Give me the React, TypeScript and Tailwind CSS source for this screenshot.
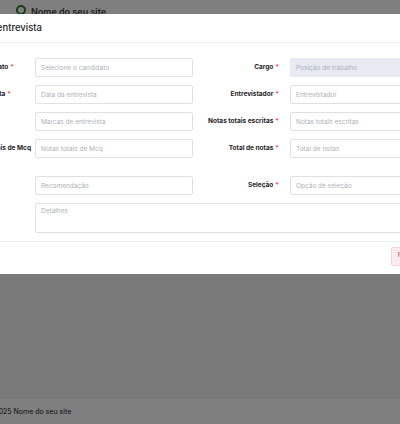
import React from 'react';

type Field = {
  label: string;
  required?: boolean;
  placeholder: string;
  disabled?: boolean;
  labelPad?: string;
};

const rows: { left: Field | null; right: Field | null; extra?: string }[] = [
  {
    left: { label: 'Candidato', required: true, placeholder: 'Selecione o candidato', labelPad: 'pr-[10px]' },
    right: { label: 'Cargo', required: true, placeholder: 'Posição de trabalho', disabled: true },
  },
  {
    left: { label: 'Data da entrevista', required: true, placeholder: 'Data da entrevista', labelPad: 'pr-[13px]' },
    right: { label: 'Entrevistador', required: true, placeholder: 'Entrevistador' },
  },
  {
    left: { label: '', placeholder: 'Marcas de entrevista' },
    right: { label: 'Notas totais escritas', required: true, placeholder: 'Notas totais escritas' },
  },
  {
    left: { label: 'Notas totais de Mcq', placeholder: 'Notas totais de Mcq', labelPad: 'translate-x-[7px]' },
    right: { label: 'Total de notas', required: true, placeholder: 'Total de notas' },
    extra: 'mb-[10px]',
  },
  {
    left: { label: '', placeholder: 'Recomendação' },
    right: { label: 'Seleção', required: true, placeholder: 'Opção de seleção' },
  },
];

const FieldCell: React.FC<{ field: Field }> = ({ field }) => (
  <div className="flex items-center">
    <label
      className={`w-[79px] shrink-0 text-right text-[6.5px] font-bold text-[#1f2328] leading-none whitespace-nowrap ${field.labelPad ?? ''}`}
    >
      {field.label}
      {field.required && <span className="text-[#e5484d] ml-[2px]">*</span>}
    </label>
    <input
      disabled={field.disabled}
      placeholder={field.placeholder}
      className={`ml-[11px] w-[158px] h-[19px] rounded-[2px] border px-[5px] text-[6.5px] outline-none placeholder:text-[#adb1b7] ${
        field.disabled ? 'bg-[#e7eaf2] border-[#e7eaf2]' : 'bg-white border-[#dfe1e5]'
      }`}
    />
  </div>
);

export default function App() {
  return (
    <div className="relative w-[400px] h-[424px] overflow-hidden bg-[#f5f5f5] font-['Inter',sans-serif]">
      {/* page behind */}
      <div className="flex flex-col h-full">
        <div className="h-[40px] bg-white flex items-start gap-[5px] pl-[16px] pt-[5px]">
          <div className="w-[10px] h-[10px] rounded-full border-2 border-[#2e7d32]" />
          <span className="text-[9px] font-semibold text-[#444]">Nome do seu site</span>
        </div>
        <div className="flex-1" />
        <div className="h-[25px] bg-white flex items-center pt-[2px] text-[7px] text-[#222]">
          <span className="-ml-[14px]">© 2025 Nome do seu site</span>
        </div>
      </div>

      {/* overlay */}
      <div className="absolute inset-0 bg-black/50" />

      {/* modal */}
      <div className="absolute top-[14px] left-[-71px] w-[528px] bg-white">
        <div className="h-[29px] flex items-center px-[16px] border-b border-[#eeeff1]">
          <h2 className="text-[9.5px] font-medium text-[#1f2328] pl-[6px]">Adicionar entrevista</h2>
        </div>
        <div className="pl-[16px] pr-[16px] pt-[15px] pb-[8px] flex flex-col gap-[8px]">
          {rows.map((r, i) => (
            <div key={i} className={`flex gap-[7px] ${r.extra ?? ''}`}>
              {r.left && <FieldCell field={r.left} />}
              {r.right && <FieldCell field={r.right} />}
            </div>
          ))}
          <div className="flex">
            <div className="w-[90px] shrink-0" />
            <textarea
              placeholder="Detalhes"
              className="w-[413px] h-[30px] resize-none rounded-[2px] border border-[#dfe1e5] px-[5px] py-[3px] text-[6.5px] outline-none placeholder:text-[#adb1b7]"
            />
          </div>
        </div>
        <div className="border-t border-[#eeeff1] h-[33px] flex items-center justify-end gap-[4px] pb-[4px]">
          <button className="h-[19px] px-[6px] rounded-[2px] bg-[#fdecef] border border-[#f8d0d8] text-[6.5px] text-[#e5484d]">
            Fechar
          </button>
          <button className="h-[19px] px-[4px] rounded-[2px] bg-[#2e7d32] text-[6.5px] text-white">
            Salvar
          </button>
        </div>
      </div>
    </div>
  );
}
